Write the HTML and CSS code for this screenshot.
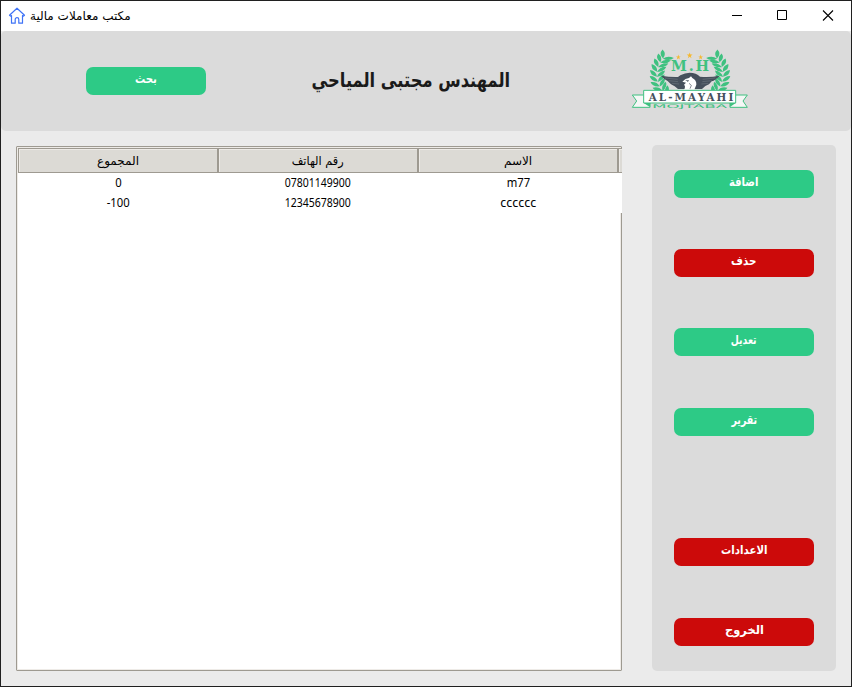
FILE: index.html
```html
<!DOCTYPE html>
<html lang="ar">
<head>
<meta charset="utf-8">
<title>مكتب معاملات مالية</title>
<link rel="stylesheet" href="styles.css">
</head>
<body>
<div class="window">
  <div class="titlebar">
    <svg class="home" width="18" height="18" viewBox="0 0 18 18" fill="none" stroke="#3f73f6" stroke-width="1.200" stroke-linejoin="round"><path d="M1.5 8.2 9 1.2l7.5 7-1 .9-1-.5v7.6h-3.7v-3.7c0-2.5-3.6-2.5-3.6 0v3.7H3.5V8.6l-1 .5z"/></svg>
    <span class="caption" dir="rtl">مكتب معاملات مالية</span>
    <svg class="controls" width="152" height="30" viewBox="700 1 152 30" fill="none" stroke="#000"><path d="M732 15.5h10M777.500 10.500h9v9h-9z"/><path d="M823 10.500l10 10M833 10.500l-10 10" stroke-width="1.100"/></svg>
  </div>
  <header class="header">
    <button class="btn search"><span class="w-search">بحث</span></button>
    <h1 dir="rtl"><span>المهندس مجتبى المياحي</span></h1>
    <svg class="logo" width="140" height="80" viewBox="0 0 420 240">
      <defs>
        <g id="leaf"><path d="M111 110Q90 106 90 87Q109 90 111 110zM111 111Q132 106 135 88Q115 92 111 111z"/></g>
        <g id="branch" fill="#3fc180" transform="translate(0 17) scale(1 .86)">
          <path d="M148 158A100 100 0 0 1 143 40" fill="none" stroke="#3fc180" stroke-width="2"/>
          <use href="#leaf" transform="rotate(-39 210 102)"/><use href="#leaf" transform="rotate(-29 210 102)"/>
          <use href="#leaf" transform="rotate(-19 210 102)"/><use href="#leaf" transform="rotate(-9 210 102)"/>
          <use href="#leaf" transform="rotate(1 210 102)"/><use href="#leaf" transform="rotate(11 210 102)"/>
          <use href="#leaf" transform="rotate(21 210 102)"/><use href="#leaf" transform="rotate(31 210 102)"/>
          <use href="#leaf" transform="rotate(40 210 102)"/>
        </g>
        <path id="star" d="M0-8 2-2H8L3 2 5 8 0 4-5 8-3 2-8-2H-2z" fill="#f5b82e"/>
      </defs>
      <use href="#branch"/>
      <use href="#branch" transform="translate(420 0) scale(-1 1)"/>
      <use href="#star" transform="translate(209 46) scale(1.100)"/>
      <use href="#star" transform="translate(175 51) scale(.9)"/>
      <use href="#star" transform="translate(242 51) scale(.9)"/>
      <path fill="#46505c" d="M123 107Q151 112 174 111L181 106Q195 98 209 98Q229 98 240 110Q269 113 299 107Q286 121 275 124L267 133L256 138L246 147H174L164 139L153 133L143 123Q132 118 123 107z"/>
      <path d="M135 114l38 4M146 122l28 3M156 130l21 2M286 114l-38 4M275 122l-28 3M265 130l-21 2" stroke="#8f979d" stroke-width="1"/>
      <path d="M192 149Q198 139 192 134L198 128L187 125Q196 115 207 114L213 109L217 114Q230 120 229 134L223 149z" fill="#fff"/>
      <path d="M197 121l9 1-5 3M207 130l7 6-4 10" fill="none" stroke="#46505c" stroke-width="2"/>
      <path d="M71 165H37L50 183 37 202H91V189M347 165H382L369 183 382 202H329V189" fill="#f5f7f6" stroke="#3fc180" stroke-width="3"/>
      <path d="M91 190H329V206H91z" fill="#dbdbdb"/>
      <path d="M71 151H347V189H71z" fill="#fff" stroke="#3fc180" stroke-width="3"/>
      <path d="M71 189l20 13v-13zM347 189l-18 13v-13z" fill="#3fc180"/>
      <text class="initials" x="153" y="94" textLength="114">M.H</text>
      <text class="name" x="86" y="182" textLength="254">AL-MAYAHI</text>
      <text class="sub" x="97" y="204" textLength="224" lengthAdjust="spacingAndGlyphs">MOJTABA</text>
    </svg>
  </header>
  <main class="content">
    <section class="table">
      <div class="row head"><div><span>المجموع</span></div><div><span class="w-phone">رقم الهاتف</span></div><div><span>الاسم</span></div><div></div></div>
      <div class="row"><div><span class="w-num">0</span></div><div><span class="w-digits">07801149900</span></div><div><span class="w-num">m77</span></div></div>
      <div class="row"><div><span class="w-num">-100</span></div><div><span class="w-digits">12345678900</span></div><div><span class="w-letters">cccccc</span></div></div>
    </section>
    <aside class="side">
      <button class="btn"><span class="w-add">اضافة</span></button>
      <button class="btn red"><span class="w-delete">حذف</span></button>
      <button class="btn"><span class="w-edit">تعديل</span></button>
      <button class="btn report"><span class="w-report">تقرير</span></button>
      <button class="btn red settings"><span class="w-settings">الاعدادات</span></button>
      <button class="btn red exit"><span class="w-exit">الخروج</span></button>
    </aside>
  </main>
</div>
</body>
</html>
```
FILE: styles.css
```css
* { box-sizing: border-box; }
body { margin: 0; background: #ebebeb; font-family: "Noto Sans", "DejaVu Sans", sans-serif; }
.window { width: 852px; height: 687px; border: 1px solid #202020; overflow: hidden; background: #ebebeb; }
.titlebar { height: 30px; background: #fff; display: flex; align-items: center; }
.home { margin-left: 7px; margin-top: -1px; }
.caption { font: 12px/18px "DejaVu Sans", sans-serif; margin-left: 4px; white-space: nowrap; }
.controls { margin-left: auto; margin-right: -1px; flex: none; }
.header { height: 100px; background: #dbdbdb; border-radius: 5px; display: flex; align-items: flex-start; }
.btn { display: flex; justify-content: center; align-items: center; width: 140px; height: 28px; flex: none; padding: 0 0 4px; border: 0; border-radius: 7px; background: #2dca86; color: #fff; font: bold 12px/20px "DejaVu Sans", sans-serif; }
.btn.red { background: #cc0a0a; }
.btn span { white-space: nowrap; }
.w-search, .w-settings { transform: scaleX(.85); }
.w-add { transform: scaleX(.83); }
.w-delete { transform: scaleX(.86); }
.w-edit { transform: scaleX(.77); }
.w-report { transform: scaleX(.79); }
.w-exit { transform: scaleX(.95); }
.search { width: 120px; margin: 36px 0 0 85px; }
h1 { width: 240px; margin: 29px 0 0 85px; font: bold 20px/40px "DejaVu Sans", sans-serif; color: #1a1a1a; display: flex; justify-content: center; white-space: nowrap; }
h1 span { transform: scaleX(.815); }
.logo { margin: 9px 0 0 89px; flex: none; }
.initials { font: bold 43px "DejaVu Serif", serif; fill: #3fc180; }
.name { font: bold 31px "DejaVu Serif", serif; fill: #46505c; }
.sub { font: 15px "DejaVu Sans", sans-serif; fill: #3fc180; }
.content { display: flex; padding: 14px 15px 15px; justify-content: space-between; }
.table { width: 606px; height: 525px; margin-top: 1px; background: #fff; border: 1px solid #9e9a91; border-radius: 1px; box-shadow: inset 1px 1px #eeebe7, inset -1px -1px #eeebe7; padding: 1px 0 0 1px; }
.row { display: grid; grid-template-columns: 200px 200px 200px 4px; width: 604px; height: 20px; background: #fff; }
.row:not(.head) { position: relative; }
.row div { display: flex; justify-content: center; align-items: center; font-size: 12px; line-height: 20px; color: #000; }
.w-digits { transform: scaleX(.875); }
.w-num { transform: scaleX(.94); }
.w-letters { transform: scaleX(1.04); }
.w-phone { transform: scaleX(.94); }
.head { height: 25px; background: #dcdad5; }
.head div { border: 1px solid #9e9a91; box-shadow: inset 1px 1px #eeebe7; font-family: "DejaVu Sans", sans-serif; }
.head div:last-child { border-right: 0; }
.side { width: 184px; height: 526px; background: #dbdbdb; border-radius: 5px; padding: 25px 22px; }
.side .btn + .btn { margin-top: 51px; }
.side .btn.report { margin-top: 52px; }
.side .btn.settings { margin-top: 102px; }
.side .btn.exit { margin-top: 52px; }
```
